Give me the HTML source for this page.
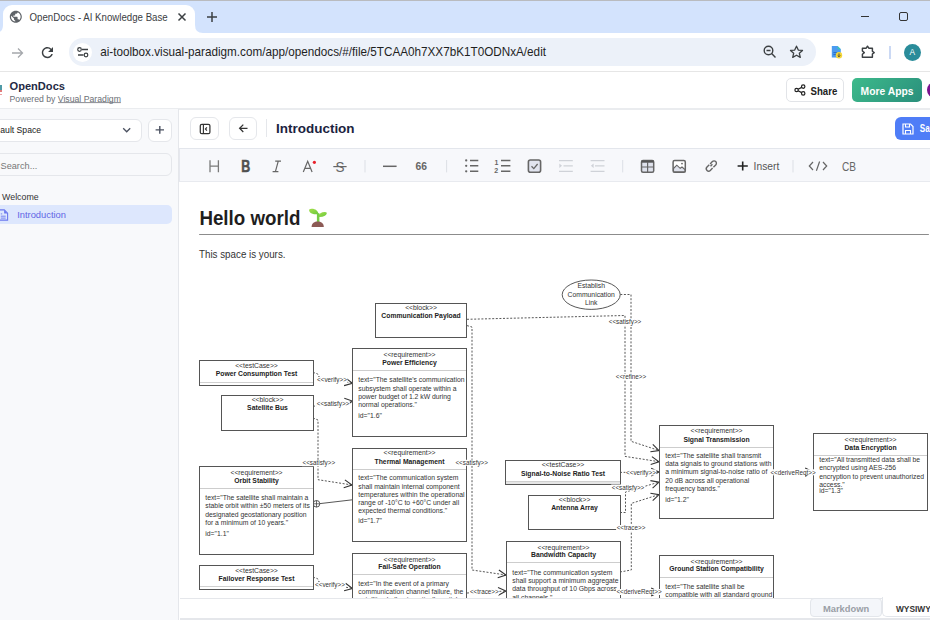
<!DOCTYPE html>
<html><head><meta charset="utf-8">
<style>
*{margin:0;padding:0;box-sizing:border-box}
html,body{width:930px;height:620px;overflow:hidden;background:#fff;font-family:"Liberation Sans",sans-serif;position:relative}
.a{position:absolute}
svg{display:block}
</style></head><body>
<!-- tab strip -->
<div class="a" style="left:0;top:0;width:930px;height:33px;background:#d3e3fd"></div>
<div class="a" style="left:0;top:0;width:930px;height:1px;background:#b9bbbf"></div>
<div class="a" style="left:3px;top:5px;width:192px;height:29px;background:#fff;border-radius:9px 9px 0 0"></div>
<!-- flare corners -->
<svg class="a" style="left:-5px;top:25px" width="8" height="9"><path d="M0 8 Q8 8 8 0 L8 9 L0 9Z" fill="#fff"/></svg>
<svg class="a" style="left:195px;top:25px" width="8" height="9"><path d="M8 8 Q0 8 0 0 L0 9 L8 9Z" fill="#fff"/></svg>
<svg class="a" style="left:0;top:0" width="30" height="30" viewBox="0 0 30 30"><path transform="translate(8.6 9.6) scale(0.6)" fill="#5f6368" d="M12 2C6.48 2 2 6.48 2 12s4.48 10 10 10 10-4.48 10-10S17.52 2 12 2zm-1 17.93c-3.950-.49-7-3.850-7-7.930 0-.62.08-1.210.21-1.790L9 15v1c0 1.100.9 2 2 2v1.930zm6.900-2.540c-.26-.81-1-1.390-1.900-1.390h-1v-3c0-.55-.45-1-1-1H8v-2h2c.55 0 1-.45 1-1V7h2c1.100 0 2-.9 2-2v-.41c2.930 1.190 5 4.060 5 7.410 0 2.080-.8 3.970-2.100 5.390z"/></svg>

<svg class="a" style="left:177px;top:12px" width="10" height="10"><path d="M1.5 1.5L8.5 8.5M8.5 1.5L1.5 8.5" stroke="#3c4043" stroke-width="1.5"/></svg>
<svg class="a" style="left:206px;top:11px" width="12" height="12"><path d="M6 1V11M1 6H11" stroke="#3c4043" stroke-width="1.5"/></svg>
<div class="a" style="left:861px;top:16px;width:8px;height:1.2px;background:#333"></div>
<div class="a" style="left:899px;top:12px;width:9px;height:9px;border:1.2px solid #333;border-radius:2px"></div>

<!-- address row -->
<div class="a" style="left:0;top:71px;width:930px;height:1px;background:#e6e6e6"></div>
<svg class="a" style="left:11px;top:46.5px" width="13" height="12"><path d="M1 6H11.5M7 1.5L11.5 6L7 10.5" stroke="#a5a8ac" stroke-width="1.3" fill="none"/></svg>
<svg class="a" style="left:0;top:0" width="70" height="70" viewBox="0 0 70 70"><path transform="translate(39 44.2) scale(0.7)" fill="#3c4043" d="M17.65 6.35A7.958 7.958 0 0 0 12 4c-4.420 0-7.990 3.580-7.990 8s3.570 8 7.990 8c3.730 0 6.840-2.550 7.730-6h-2.080c-.82 2.330-3.040 4-5.650 4-3.310 0-6-2.690-6-6s2.690-6 6-6c1.660 0 3.140.69 4.220 1.780L13 11h7V4l-2.350 2.350z"/></svg>
<div class="a" style="left:69px;top:38px;width:747px;height:28px;background:#ecf1f9;border-radius:14px"></div>
<div class="a" style="left:73px;top:43px;width:19px;height:19px;background:#fff;border-radius:50%"></div>
<svg class="a" style="left:77px;top:47px" width="12" height="11"><circle cx="2.5" cy="2.5" r="1.8" stroke="#3c4043" stroke-width="1.2" fill="none"/><path d="M5 2.5H11M1 8H6.5" stroke="#3c4043" stroke-width="1.4"/><circle cx="9" cy="8" r="1.8" stroke="#3c4043" stroke-width="1.2" fill="none"/></svg>

<svg class="a" style="left:763px;top:45px" width="14" height="14"><circle cx="5.5" cy="5.5" r="4.3" stroke="#3c4043" stroke-width="1.4" fill="none"/><path d="M3.5 5.5H7.5M8.6 8.6L12.5 12.5" stroke="#3c4043" stroke-width="1.4"/></svg>
<svg class="a" style="left:789px;top:45px" width="15" height="14" viewBox="0 0 15 14"><path d="M7.5 1.2L9.3 5.1L13.5 5.4L10.3 8.2L11.3 12.4L7.5 10.2L3.7 12.4L4.7 8.2L1.5 5.4L5.7 5.1Z" stroke="#3c4043" stroke-width="1.3" fill="none" stroke-linejoin="round"/></svg>
<svg class="a" style="left:830px;top:44px" width="17" height="17"><path d="M1.8 2H7.6L10.8 5.2V13.6H1.8Z" fill="#4b9bf0"/><path d="M7.6 2L10.8 5.2H7.6Z" fill="#3cc7b0"/><rect x="3.4" y="8" width="3.6" height="1.1" fill="#2f6fc8"/><rect x="3.4" y="10" width="3" height="1.1" fill="#2f6fc8"/><circle cx="9" cy="11.3" r="3.2" fill="#f4d63a"/><path d="M9 9.4V12.6M7.7 11.5L9 12.8L10.3 11.5" stroke="#444" stroke-width="0.9" fill="none"/></svg>
<svg class="a" style="left:860px;top:44px" width="17" height="16" viewBox="0 0 17 16"><path d="M2.4 4.2H6.2L7.5 2.2L8.8 4.2H12.4V7.2L14.2 8.6L12.4 10V13.2H2.4V10.2L4.3 8.6L2.4 7Z" stroke="#3c4043" stroke-width="1.45" fill="none" stroke-linejoin="round"/></svg>
<div class="a" style="left:889.3px;top:45.5px;width:1.4px;height:13px;background:#cbd9f4"></div>
<div class="a" style="left:903.7px;top:43.8px;width:17.2px;height:17.2px;background:#2a8c9a;border-radius:50%;color:#fff;font-size:8.4px;text-align:center;line-height:17.6px">A</div>

<!-- app header -->
<div class="a" style="left:0;top:108px;width:930px;height:2px;background:#eaecef"></div>
<div class="a" style="left:0;top:85px;width:1.5px;height:4.5px;background:#4f9aa6"></div><div class="a" style="left:0;top:90.3px;width:1.5px;height:1.5px;background:#e07a7a"></div><div class="a" style="left:0;top:94px;width:1.5px;height:1px;background:#eca0a0"></div>


<div class="a" style="left:786px;top:78px;width:58px;height:24px;border:1px solid #e2e4e8;border-radius:5px;background:#fff"></div>
<svg class="a" style="left:794px;top:84px" width="12" height="12" viewBox="0 0 12 12"><circle cx="9.2" cy="2.6" r="1.7" stroke="#222" stroke-width="1.2" fill="none"/><circle cx="2.6" cy="6" r="1.7" stroke="#222" stroke-width="1.2" fill="none"/><circle cx="9.2" cy="9.4" r="1.7" stroke="#222" stroke-width="1.2" fill="none"/><path d="M4.1 5.2L7.7 3.4M4.1 6.8L7.7 8.6" stroke="#222" stroke-width="1.2"/></svg>

<div class="a" style="left:852px;top:78px;width:70px;height:24px;border-radius:5px;background:linear-gradient(135deg,#3dba8b,#2a8f7c);"></div>
<div class="a" style="left:927px;top:82.4px;width:16px;height:16px;border-radius:50%;background:#7a1390"></div>

<!-- sidebar -->
<div class="a" style="left:0;top:109px;width:179px;height:511px;background:#f8f9fb;border-right:1px solid #e5e7eb"></div>
<div class="a" style="left:-10px;top:119px;width:152px;height:22.5px;background:#fff;border:1px solid #e5e7eb;border-radius:6px"></div>

<svg class="a" style="left:122px;top:127px" width="10" height="7"><path d="M1.2 1.2L4.7 4.8L8.2 1.2" stroke="#4b5160" stroke-width="1.3" fill="none"/></svg>
<div class="a" style="left:148px;top:119px;width:24px;height:23px;background:#fff;border:1px solid #e5e7eb;border-radius:6px"></div>
<svg class="a" style="left:154px;top:124px" width="12" height="12"><path d="M5.8 2V9.8M1.6 5.9H10" stroke="#4b5160" stroke-width="1.4"/></svg>
<div class="a" style="left:-10px;top:153px;width:182px;height:23px;background:#f8f9fb;border:1px solid #e5e7eb;border-radius:6px"></div>


<div class="a" style="left:-10px;top:205px;width:182px;height:19px;background:#dde7fd;border-radius:5px"></div>
<svg class="a" style="left:-2px;top:208.5px" width="11" height="12"><path d="M0.8 0.9H6.3L9.6 4.2V11.1H0.8Z" stroke="#6b78ee" stroke-width="1.1" fill="none"/><path d="M6.1 1V4.4H9.5Z" fill="#6b78ee"/><path d="M2.8 4.9H4.2M2.8 7.2H7.7M2.8 9.1H7.7" stroke="#6b78ee" stroke-width="0.9"/></svg>


<!-- doc header -->
<div class="a" style="left:190px;top:117px;width:29px;height:23px;border:1px solid #e5e7eb;border-radius:6px;background:#fff"></div>
<svg class="a" style="left:199px;top:122.5px" width="12" height="12"><rect x="1.3" y="1.3" width="9.6" height="9.4" rx="1.5" stroke="#333" stroke-width="1.25" fill="none"/><path d="M4.4 1.5V10.5M7.9 4.3L6.4 6L7.9 7.7" stroke="#333" stroke-width="1.15" fill="none"/></svg>
<div class="a" style="left:229px;top:117px;width:28px;height:23px;border:1px solid #e5e7eb;border-radius:6px;background:#fff"></div>
<svg class="a" style="left:238px;top:123px" width="12" height="11"><path d="M9.5 5.3H1.8M5.3 1.6L1.6 5.3L5.3 9" stroke="#333" stroke-width="1.25" fill="none"/></svg>
<div class="a" style="left:266px;top:119px;width:1px;height:18px;background:#e5e7eb"></div>

<div class="a" style="left:895px;top:117px;width:50px;height:23px;border-radius:6px;background:#4f7df7"></div>
<svg class="a" style="left:902px;top:123px" width="12" height="12"><path d="M1 1H8.5L11 3.5V11H1Z" stroke="#fff" stroke-width="1.2" fill="none"/><path d="M3.5 1V4H7.5V1M3.5 11V7.5H8.5V11" stroke="#fff" stroke-width="1.1" fill="none"/></svg>


<!-- toolbar -->
<div class="a" id="tb" style="left:179px;top:147.5px;width:751px;height:34.5px;background:#f7f8fb;border-top:1.5px solid #e3e6ec;border-bottom:1px solid #e8eaef;border-left:1px solid #e6e8ee"></div>
<!-- TOOLBAR_ICONS -->
<svg class="a" style="left:0;top:0" width="930" height="620" viewBox="0 0 930 620">
<g fill="none" stroke-linecap="butt">
<!-- H -->
<path d="M210 160.3V172.2M218.4 160.3V172.2M210 166.1H218.4" stroke="#7a7a7a" stroke-width="1.3"/>
<!-- B -->
<text x="241.2" y="172.1" font-family="Liberation Sans" font-weight="bold" font-size="15.6" fill="#505050" stroke="#505050" stroke-width="0.5" textLength="9" lengthAdjust="spacingAndGlyphs">B</text>
<!-- I -->
<path d="M275.2 161.2H281M272.6 171.7H278.4M278.2 161.3L275.4 171.6" stroke="#666" stroke-width="1.2"/>
<!-- A -->
<path d="M303.3 172.1L307.7 161.3L312.1 172.1M304.8 168.4H310.6" stroke="#666" stroke-width="1.2"/>
<circle cx="314.4" cy="162.3" r="1.6" fill="#e8202a" stroke="none"/>
<!-- S -->
<text x="335.4" y="172.1" font-family="Liberation Sans" font-size="15" fill="#666" stroke="none" textLength="9" lengthAdjust="spacingAndGlyphs">S</text>
<path d="M333.3 166.6H346.6" stroke="#666" stroke-width="1.2"/>
<!-- dividers -->
<path d="M365 160V172.4M446.6 160V172.4M622.7 160V172.4M793 160V172.4" stroke="#dcdfe5" stroke-width="1"/>
<!-- dash -->
<path d="M383 166.3H396.6" stroke="#666" stroke-width="1.5"/>
<!-- 66 -->
<text x="415.6" y="170.1" font-family="Liberation Sans" font-weight="bold" font-size="10" fill="#666" stroke="none" textLength="11.5" lengthAdjust="spacingAndGlyphs">66</text>
<!-- bullets -->
<circle cx="466.2" cy="160.4" r="1.15" fill="#666" stroke="none"/><circle cx="466.2" cy="165.8" r="1.15" fill="#666" stroke="none"/><circle cx="466.2" cy="171.3" r="1.15" fill="#666" stroke="none"/>
<path d="M470 160.4H478.3M470 165.8H478.3M470 171.3H478.3" stroke="#666" stroke-width="1.45"/>
<!-- ordered -->
<text x="494.6" y="165.3" font-family="Liberation Sans" font-weight="bold" font-size="7" fill="#666" stroke="none">1</text>
<text x="494.3" y="172.6" font-family="Liberation Sans" font-weight="bold" font-size="7" fill="#666" stroke="none">2</text>
<path d="M501 160.4H510.4M501 165.8H510.4M501 171.3H510.4" stroke="#666" stroke-width="1.45"/>
<!-- checkbox -->
<rect x="528.4" y="160" width="12.2" height="12.2" rx="2" fill="#e1e4ef" stroke="#666" stroke-width="1.6"/>
<path d="M531.5 166.3L533.8 168.6L537.6 164" stroke="#666" stroke-width="1.3"/>
<!-- indent -->
<path d="M559 160.6H572.8M563.5 165.8H572.8M559 171.3H572.8" stroke="#cfd2d8" stroke-width="1.2"/>
<path d="M559.3 163.6L562 165.8L559.3 168Z" fill="#cfd2d8" stroke="none"/>
<path d="M590.6 160.6H604.5M595 165.8H604.5M590.6 171.3H604.5" stroke="#cfd2d8" stroke-width="1.2"/>
<path d="M593.6 163.6L590.9 165.8L593.6 168Z" fill="#cfd2d8" stroke="none"/>
<!-- table -->
<rect x="641.5" y="160.4" width="12.2" height="11.8" rx="1.5" fill="#dfe2ec" stroke="#666" stroke-width="1.5"/>
<path d="M641.5 161.6H653.7" stroke="#555" stroke-width="2.2"/>
<path d="M647.6 162V172.2M641.5 167H653.7" stroke="#666" stroke-width="1.2"/>
<!-- image -->
<rect x="673.1" y="160.4" width="12.2" height="11.8" rx="1.5" fill="#fff" stroke="#666" stroke-width="1.5"/>
<path d="M673.5 168.5L676.8 165.2L680.2 168.3L682 167L684.9 169.5V171.8H673.5Z" fill="#dfe2ec" stroke="#666" stroke-width="1.1"/>
<circle cx="682" cy="163.6" r="0.9" fill="#666" stroke="none"/>
<!-- link -->
<path d="M709.3 164.8L707 167.1A2.3 2.3 0 0 0 710.3 170.4L712.6 168.1M710.5 166.2L712.4 164.3M713.4 167.2L715.7 164.9A2.3 2.3 0 0 0 712.4 161.6L710.1 163.9" stroke="#666" stroke-width="1.4"/>
<!-- plus -->
<path d="M742.7 161.4V170.5M737.6 166H747.8" stroke="#222" stroke-width="1.6"/>

<!-- code -->
<path d="M813 162L809.3 166L813 170M823 162L826.7 166L823 170M819.6 161.5L816.4 170.7" stroke="#666" stroke-width="1.2"/>

</g></svg>

<!-- content -->

<!-- SPROUT -->
<svg class="a" style="left:300px;top:200px" width="40" height="32" viewBox="0 0 40 32">
<defs><linearGradient id="lf" x1="0" y1="0" x2="1" y2="1"><stop offset="0" stop-color="#a4e04c"/><stop offset="1" stop-color="#6cc83e"/></linearGradient></defs>
<path d="M18.6 14.2C18.2 10.8 15 8.6 11.5 8.8C9.6 8.9 8.8 9.6 9.2 10.9C10 13.2 13.5 14.6 18.6 14.2Z" fill="url(#lf)"/>
<path d="M17.6 16.8C19 13.4 22 11.9 25 12.1C26.5 12.2 27 12.7 26.7 13.7C26 16 22.5 17.4 17.6 16.8Z" fill="url(#lf)"/>
<path d="M16.9 13.2H19.4V22.4H16.9Z" fill="#74cc44"/>
<path d="M11.6 26.9C11.8 23.1 14.5 21.6 17.7 21.6C21 21.6 23.6 23.1 23.8 26.9Z" fill="#8c5a55"/>
</svg>
<div class="a" style="left:199px;top:233.7px;width:729.7px;height:1.8px;background:#8c8c8c;border-radius:1px"></div>


<!-- DIAGRAM -->
<svg class="a" style="left:0;top:0" width="930" height="620" viewBox="0 0 930 620" font-family="Liberation Sans">
<path d="M467.0 319.3 L625.0 315.5 L625.0 456.4 L659.0 461.7" fill="none" stroke="#444" stroke-width="0.9" stroke-dasharray="2 1.6"/>
<path d="M651.9 456.6L659.0 461.7L650.7 464.4" fill="none" stroke="#333" stroke-width="1.1"/>
<path d="M620.3 294.5 L631.0 294.5 L631.0 441.3 L659.0 450.5" fill="none" stroke="#444" stroke-width="0.9" stroke-dasharray="2 1.6"/>
<path d="M652.8 444.4L659.0 450.5L650.4 451.8" fill="none" stroke="#333" stroke-width="1.1"/>
<path d="M467.0 325.6 L472.0 327.0 L472.0 570.0 L506.0 575.0" fill="none" stroke="#444" stroke-width="0.9" stroke-dasharray="2 1.6"/>
<path d="M498.9 570.0L506.0 575.0L497.7 577.7" fill="none" stroke="#333" stroke-width="1.1"/>
<path d="M313.0 372.4 L317.5 373.8 L319.0 377.0 L352.5 383.2" fill="none" stroke="#444" stroke-width="0.9" stroke-dasharray="2 1.6"/>
<path d="M345.5 377.9L352.5 383.2L344.1 385.6" fill="none" stroke="#333" stroke-width="1.1"/>
<path d="M313.0 406.3 L352.5 401.1" fill="none" stroke="#444" stroke-width="0.9" stroke-dasharray="2 1.6"/>
<path d="M344.3 398.2L352.5 401.1L345.3 406.0" fill="none" stroke="#333" stroke-width="1.1"/>
<path d="M313.0 418.0 L318.0 420.0 L318.0 479.7 L352.0 485.0" fill="none" stroke="#444" stroke-width="0.9" stroke-dasharray="2 1.6"/>
<path d="M344.9 479.9L352.0 485.0L343.7 487.7" fill="none" stroke="#333" stroke-width="1.1"/>
<path d="M320 503.6L352.4 499.8" stroke="#444" stroke-width="0.9" fill="none"/>
<circle cx="316.5" cy="503.8" r="3.3" fill="#fff" stroke="#444" stroke-width="0.9"/><path d="M313.2 503.8H319.8M316.5 500.5V507.1" stroke="#444" stroke-width="0.8"/>
<path d="M313.0 577.2 L317.5 578.6 L319.0 582.0 L352.5 588.5" fill="none" stroke="#444" stroke-width="0.9" stroke-dasharray="2 1.6"/>
<path d="M345.6 583.2L352.5 588.5L344.1 590.8" fill="none" stroke="#333" stroke-width="1.1"/>
<path d="M467.0 593.0 L506.0 591.0" fill="none" stroke="#444" stroke-width="0.9" stroke-dasharray="2 1.6"/>
<path d="M498.0 587.5L506.0 591.0L498.4 595.3" fill="none" stroke="#333" stroke-width="1.1"/>
<path d="M620.0 472.4 L659.0 472.0" fill="none" stroke="#444" stroke-width="0.9" stroke-dasharray="2 1.6"/>
<path d="M651.2 468.2L659.0 472.0L651.2 476.0" fill="none" stroke="#333" stroke-width="1.1"/>
<path d="M620.0 512.5 L625.5 512.5 L625.5 492.0 L659.0 482.1" fill="none" stroke="#444" stroke-width="0.9" stroke-dasharray="2 1.6"/>
<path d="M650.4 480.6L659.0 482.1L652.6 488.1" fill="none" stroke="#333" stroke-width="1.1"/>
<path d="M620.0 572.0 L631.3 570.0 L631.3 503.4 L659.0 494.6" fill="none" stroke="#444" stroke-width="0.9" stroke-dasharray="2 1.6"/>
<path d="M650.4 493.2L659.0 494.6L652.7 500.7" fill="none" stroke="#333" stroke-width="1.1"/>
<path d="M620.0 592.0 L659.0 592.0" fill="none" stroke="#444" stroke-width="0.9" stroke-dasharray="2 1.6"/>
<path d="M651.2 588.1L659.0 592.0L651.2 595.9" fill="none" stroke="#333" stroke-width="1.1"/>
<path d="M773.7 472.0 L813.0 472.0" fill="none" stroke="#444" stroke-width="0.9" stroke-dasharray="2 1.6"/>
<path d="M805.2 468.1L813.0 472.0L805.2 475.9" fill="none" stroke="#333" stroke-width="1.1"/>
<rect x="375.5" y="303.5" width="91.0" height="34.0" fill="#fff" stroke="#555" stroke-width="1"/>
<text x="421.0" y="309.5" font-size="6.8" text-anchor="middle" fill="#333">&lt;&lt;block&gt;&gt;</text>
<text x="421.0" y="317.5" font-size="6.8" font-weight="bold" text-anchor="middle" fill="#222">Communication Payload</text>
<ellipse cx="591.2" cy="294.7" rx="29" ry="14.7" fill="#fff" stroke="#444" stroke-width="0.9"/>
<text x="591.2" y="288.4" font-size="6.8" text-anchor="middle" fill="#333">Establish</text>
<text x="591.2" y="296.8" font-size="6.8" text-anchor="middle" fill="#333">Communication</text>
<text x="591.2" y="305.2" font-size="6.8" text-anchor="middle" fill="#333">Link</text>
<rect x="199.5" y="360.5" width="114.0" height="25.0" fill="#fff" stroke="#555" stroke-width="1"/>
<path d="M200.0 382.5H313.0" stroke="#d0d0d0" stroke-width="1"/>
<text x="256.5" y="367.5" font-size="6.8" text-anchor="middle" fill="#333">&lt;&lt;testCase&gt;&gt;</text>
<text x="256.5" y="376.0" font-size="6.8" font-weight="bold" text-anchor="middle" fill="#222">Power Consumption Test</text>
<rect x="352.5" y="348.5" width="114.0" height="88.0" fill="#fff" stroke="#555" stroke-width="1"/>
<path d="M353.0 370.5H466.0" stroke="#cdcdcd" stroke-width="1"/>
<text x="409.5" y="357.3" font-size="6.8" text-anchor="middle" fill="#333">&lt;&lt;requirement&gt;&gt;</text>
<text x="409.5" y="364.8" font-size="6.8" font-weight="bold" text-anchor="middle" fill="#222">Power Efficiency</text>
<text x="358.3" y="382.3" font-size="6.8" text-anchor="start" fill="#333">text="The satellite's communication</text>
<text x="358.3" y="390.6" font-size="6.8" text-anchor="start" fill="#333">subsystem shall operate within a</text>
<text x="358.3" y="398.9" font-size="6.8" text-anchor="start" fill="#333">power budget of 1.2 kW during</text>
<text x="358.3" y="407.2" font-size="6.8" text-anchor="start" fill="#333">normal operations."</text>
<text x="358.3" y="418.4" font-size="6.8" text-anchor="start" fill="#333">id="1.6"</text>
<rect x="221.5" y="395.5" width="92.0" height="35.0" fill="#fff" stroke="#555" stroke-width="1"/>
<text x="267.5" y="402.1" font-size="6.8" text-anchor="middle" fill="#333">&lt;&lt;block&gt;&gt;</text>
<text x="267.5" y="410.1" font-size="6.8" font-weight="bold" text-anchor="middle" fill="#222">Satellite Bus</text>
<rect x="352.5" y="448.5" width="114.0" height="93.0" fill="#fff" stroke="#555" stroke-width="1"/>
<path d="M353.0 469.5H466.0" stroke="#cdcdcd" stroke-width="1"/>
<text x="409.5" y="455.3" font-size="6.8" text-anchor="middle" fill="#333">&lt;&lt;requirement&gt;&gt;</text>
<text x="409.5" y="464.0" font-size="6.8" font-weight="bold" text-anchor="middle" fill="#222">Thermal Management</text>
<text x="358.3" y="480.2" font-size="6.8" text-anchor="start" fill="#333">text="The communication system</text>
<text x="358.3" y="488.5" font-size="6.8" text-anchor="start" fill="#333">shall maintain internal component</text>
<text x="358.3" y="496.8" font-size="6.8" text-anchor="start" fill="#333">temperatures within the operational</text>
<text x="358.3" y="505.1" font-size="6.8" text-anchor="start" fill="#333">range of -10°C to +60°C under all</text>
<text x="358.3" y="513.4" font-size="6.8" text-anchor="start" fill="#333">expected thermal conditions."</text>
<text x="358.3" y="523.4" font-size="6.8" text-anchor="start" fill="#333">id="1.7"</text>
<rect x="199.5" y="466.5" width="114.0" height="88.0" fill="#fff" stroke="#555" stroke-width="1"/>
<path d="M200.0 488.5H313.0" stroke="#cdcdcd" stroke-width="1"/>
<text x="256.5" y="474.9" font-size="6.8" text-anchor="middle" fill="#333">&lt;&lt;requirement&gt;&gt;</text>
<text x="256.5" y="482.9" font-size="6.8" font-weight="bold" text-anchor="middle" fill="#222">Orbit Stability</text>
<text x="205.3" y="499.9" font-size="6.8" text-anchor="start" fill="#333">text="The satellite shall maintain a</text>
<text x="205.3" y="508.2" font-size="6.8" text-anchor="start" fill="#333">stable orbit within ±50 meters of its</text>
<text x="205.3" y="516.5" font-size="6.8" text-anchor="start" fill="#333">designated geostationary position</text>
<text x="205.3" y="524.8" font-size="6.8" text-anchor="start" fill="#333">for a minimum of 10 years."</text>
<text x="205.3" y="536.0" font-size="6.8" text-anchor="start" fill="#333">id="1.1"</text>
<rect x="199.5" y="565.5" width="114.0" height="24.0" fill="#fff" stroke="#555" stroke-width="1"/>
<path d="M200.0 586.5H313.0" stroke="#d0d0d0" stroke-width="1"/>
<text x="256.5" y="572.7" font-size="6.8" text-anchor="middle" fill="#333">&lt;&lt;testCase&gt;&gt;</text>
<text x="256.5" y="581.2" font-size="6.8" font-weight="bold" text-anchor="middle" fill="#222">Failover Response Test</text>
<rect x="352.5" y="553.5" width="114.0" height="87.0" fill="#fff" stroke="#555" stroke-width="1"/>
<path d="M353.0 574.5H466.0" stroke="#cdcdcd" stroke-width="1"/>
<text x="409.5" y="561.6" font-size="6.8" text-anchor="middle" fill="#333">&lt;&lt;requirement&gt;&gt;</text>
<text x="409.5" y="569.1" font-size="6.8" font-weight="bold" text-anchor="middle" fill="#222">Fail-Safe Operation</text>
<text x="358.3" y="585.8" font-size="6.8" text-anchor="start" fill="#333">text="In the event of a primary</text>
<text x="358.3" y="594.1" font-size="6.8" text-anchor="start" fill="#333">communication channel failure, the</text>
<text x="358.3" y="602.4" font-size="6.8" text-anchor="start" fill="#333">satellite shall automatically switch</text>
<rect x="505.5" y="460.5" width="115.0" height="24.0" fill="#fff" stroke="#555" stroke-width="1"/>
<rect x="506.0" y="481.3" width="114.0" height="2.7" fill="#e6e6e6"/>
<path d="M506.0 481.5H620.0" stroke="#d0d0d0" stroke-width="1"/>
<text x="563.0" y="467.4" font-size="6.8" text-anchor="middle" fill="#333">&lt;&lt;testCase&gt;&gt;</text>
<text x="563.0" y="475.9" font-size="6.8" font-weight="bold" text-anchor="middle" fill="#222">Signal-to-Noise Ratio Test</text>
<rect x="528.5" y="495.5" width="92.0" height="34.0" fill="#fff" stroke="#555" stroke-width="1"/>
<text x="574.5" y="501.7" font-size="6.8" text-anchor="middle" fill="#333">&lt;&lt;block&gt;&gt;</text>
<text x="574.5" y="509.7" font-size="6.8" font-weight="bold" text-anchor="middle" fill="#222">Antenna Array</text>
<rect x="506.5" y="541.5" width="114.0" height="99.0" fill="#fff" stroke="#555" stroke-width="1"/>
<path d="M507.0 562.5H620.0" stroke="#cdcdcd" stroke-width="1"/>
<text x="563.5" y="549.6" font-size="6.8" text-anchor="middle" fill="#333">&lt;&lt;requirement&gt;&gt;</text>
<text x="563.5" y="557.1" font-size="6.8" font-weight="bold" text-anchor="middle" fill="#222">Bandwidth Capacity</text>
<text x="512.3" y="574.6" font-size="6.8" text-anchor="start" fill="#333">text="The communication system</text>
<text x="512.3" y="582.9" font-size="6.8" text-anchor="start" fill="#333">shall support a minimum aggregate</text>
<text x="512.3" y="591.2" font-size="6.8" text-anchor="start" fill="#333">data throughput of 10 Gbps across</text>
<text x="512.3" y="599.5" font-size="6.8" text-anchor="start" fill="#333">all channels."</text>
<rect x="659.5" y="425.5" width="114.0" height="93.0" fill="#fff" stroke="#555" stroke-width="1"/>
<path d="M660.0 447.5H773.0" stroke="#cdcdcd" stroke-width="1"/>
<text x="716.5" y="432.9" font-size="6.8" text-anchor="middle" fill="#333">&lt;&lt;requirement&gt;&gt;</text>
<text x="716.5" y="442.0" font-size="6.8" font-weight="bold" text-anchor="middle" fill="#222">Signal Transmission</text>
<text x="665.3" y="457.7" font-size="6.8" text-anchor="start" fill="#333">text="The satellite shall transmit</text>
<text x="665.3" y="466.0" font-size="6.8" text-anchor="start" fill="#333">data signals to ground stations with</text>
<text x="665.3" y="474.3" font-size="6.8" text-anchor="start" fill="#333">a minimum signal-to-noise ratio of</text>
<text x="665.3" y="482.6" font-size="6.8" text-anchor="start" fill="#333">20 dB across all operational</text>
<text x="665.3" y="490.9" font-size="6.8" text-anchor="start" fill="#333">frequency bands."</text>
<text x="665.3" y="502.1" font-size="6.8" text-anchor="start" fill="#333">id="1.2"</text>
<rect x="813.5" y="433.5" width="114.0" height="77.0" fill="#fff" stroke="#555" stroke-width="1"/>
<path d="M814.0 455.5H927.0" stroke="#cdcdcd" stroke-width="1"/>
<text x="870.5" y="442.2" font-size="6.8" text-anchor="middle" fill="#333">&lt;&lt;requirement&gt;&gt;</text>
<text x="870.5" y="449.7" font-size="6.8" font-weight="bold" text-anchor="middle" fill="#222">Data Encryption</text>
<text x="819.3" y="462.0" font-size="6.8" text-anchor="start" fill="#333">text="All transmitted data shall be</text>
<text x="819.3" y="470.3" font-size="6.8" text-anchor="start" fill="#333">encrypted using AES-256</text>
<text x="819.3" y="478.6" font-size="6.8" text-anchor="start" fill="#333">encryption to prevent unauthorized</text>
<text x="819.3" y="486.9" font-size="6.8" text-anchor="start" fill="#333">access."</text>
<text x="819.3" y="493.2" font-size="6.8" text-anchor="start" fill="#333">id="1.3"</text>
<rect x="659.5" y="555.5" width="114.0" height="85.0" fill="#fff" stroke="#555" stroke-width="1"/>
<path d="M660.0 577.5H773.0" stroke="#cdcdcd" stroke-width="1"/>
<text x="716.5" y="563.9" font-size="6.8" text-anchor="middle" fill="#333">&lt;&lt;requirement&gt;&gt;</text>
<text x="716.5" y="571.4" font-size="6.8" font-weight="bold" text-anchor="middle" fill="#222">Ground Station Compatibility</text>
<text x="665.3" y="588.9" font-size="6.8" text-anchor="start" fill="#333">text="The satellite shall be</text>
<text x="665.3" y="597.2" font-size="6.8" text-anchor="start" fill="#333">compatible with all standard ground</text>
<text x="665.3" y="605.5" font-size="6.8" text-anchor="start" fill="#333">stations</text>
<rect x="608.2" y="319.0" width="33.6" height="6" fill="#fff"/>
<text x="625.0" y="324.2" font-size="6.3" text-anchor="middle" fill="#333">&lt;&lt;satisfy&gt;&gt;</text>
<rect x="615.3" y="374.0" width="31.5" height="6" fill="#fff"/>
<text x="631.0" y="379.2" font-size="6.3" text-anchor="middle" fill="#333">&lt;&lt;refine&gt;&gt;</text>
<rect x="454.9" y="459.8" width="33.6" height="6" fill="#fff"/>
<text x="471.7" y="465.0" font-size="6.3" text-anchor="middle" fill="#333">&lt;&lt;satisfy&gt;&gt;</text>
<rect x="316.6" y="377.0" width="30.8" height="6" fill="#fff"/>
<text x="332.0" y="382.2" font-size="6.3" text-anchor="middle" fill="#333">&lt;&lt;verify&gt;&gt;</text>
<rect x="316.2" y="401.0" width="33.6" height="6" fill="#fff"/>
<text x="333.0" y="406.2" font-size="6.3" text-anchor="middle" fill="#333">&lt;&lt;satisfy&gt;&gt;</text>
<rect x="302.0" y="460.2" width="33.6" height="6" fill="#fff"/>
<text x="318.8" y="465.4" font-size="6.3" text-anchor="middle" fill="#333">&lt;&lt;satisfy&gt;&gt;</text>
<rect x="314.6" y="582.0" width="30.8" height="6" fill="#fff"/>
<text x="330.0" y="587.2" font-size="6.3" text-anchor="middle" fill="#333">&lt;&lt;verify&gt;&gt;</text>
<rect x="469.4" y="588.9" width="29.7" height="6" fill="#fff"/>
<text x="484.3" y="594.1" font-size="6.3" text-anchor="middle" fill="#333">&lt;&lt;trace&gt;&gt;</text>
<rect x="625.6" y="469.4" width="30.8" height="6" fill="#fff"/>
<text x="641.0" y="474.6" font-size="6.3" text-anchor="middle" fill="#333">&lt;&lt;verify&gt;&gt;</text>
<rect x="611.2" y="484.5" width="33.6" height="6" fill="#fff"/>
<text x="628.0" y="489.7" font-size="6.3" text-anchor="middle" fill="#333">&lt;&lt;satisfy&gt;&gt;</text>
<rect x="616.1" y="525.0" width="29.7" height="6" fill="#fff"/>
<text x="631.0" y="530.2" font-size="6.3" text-anchor="middle" fill="#333">&lt;&lt;trace&gt;&gt;</text>
<rect x="615.9" y="589.0" width="46.2" height="6" fill="#fff"/>
<text x="639.0" y="594.2" font-size="6.3" text-anchor="middle" fill="#333">&lt;&lt;deriveReqt&gt;&gt;</text>
<rect x="769.9" y="469.3" width="46.2" height="6" fill="#fff"/>
<text x="793.0" y="474.5" font-size="6.3" text-anchor="middle" fill="#333">&lt;&lt;deriveReqt&gt;&gt;</text>
</svg>
<!-- /DIAGRAM -->

<!-- bottom bar -->
<div class="a" style="left:180px;top:598px;width:750px;height:22px;background:#fff;border-top:1px solid #e5e7eb"></div>
<div class="a" style="left:180px;top:618px;width:750px;height:2px;background:#e5e7eb"></div>
<div class="a" style="left:810px;top:598px;width:72px;height:19px;background:#f4f6fa;border:1px solid #e3e6eb;border-radius:4px"></div><div class="a" style="left:882px;top:597px;width:60px;height:20px;background:#fff;border-left:1px solid #e3e6eb;border-bottom:1px solid #e3e6eb;border-radius:0 0 0 5px"></div>

<!-- UITEXT -->
<svg class="a" style="left:0;top:0" width="930" height="620" viewBox="0 0 930 620" font-family="Liberation Sans">
<text x="29.50" y="21.10" font-size="10.56" fill="#3c4043" textLength="138.20" lengthAdjust="spacingAndGlyphs">OpenDocs - AI Knowledge Base</text>
<text x="100.20" y="56.30" font-size="12.35" fill="#1f1f1f" textLength="445.80" lengthAdjust="spacingAndGlyphs">ai-toolbox.visual-paradigm.com/app/opendocs/#/file/5TCAA0h7XX7bK1T0ODNxA/edit</text>
<text x="9.50" y="89.70" font-size="10.56" font-weight="bold" fill="#1f2a44" textLength="55.50" lengthAdjust="spacingAndGlyphs">OpenDocs</text>
<text x="9.50" y="101.60" font-size="9.05" fill="#6b6f76" textLength="111.40" lengthAdjust="spacingAndGlyphs">Powered by Visual Paradigm</text>
<path d="M58 102.6H120.9" stroke="#6b6f76" stroke-width="0.8"/>
<text x="810.60" y="95.40" font-size="11.80" font-weight="bold" fill="#222" textLength="26.70" lengthAdjust="spacingAndGlyphs">Share</text>
<text x="860.60" y="95.40" font-size="11.80" font-weight="bold" fill="#fff" textLength="52.90" lengthAdjust="spacingAndGlyphs">More Apps</text>
<text x="0.30" y="133.20" font-size="9.33" fill="#222" textLength="40.80" lengthAdjust="spacingAndGlyphs">ault Space</text>
<text x="0.50" y="168.70" font-size="9.88" fill="#777" textLength="36.80" lengthAdjust="spacingAndGlyphs">Search...</text>
<text x="2.10" y="200.00" font-size="9.33" fill="#333" textLength="36.60" lengthAdjust="spacingAndGlyphs">Welcome</text>
<text x="17.20" y="217.90" font-size="9.33" fill="#6166e6" textLength="48.80" lengthAdjust="spacingAndGlyphs">Introduction</text>
<text x="276.00" y="133.00" font-size="13.31" font-weight="bold" fill="#1b2340" textLength="78.60" lengthAdjust="spacingAndGlyphs">Introduction</text>
<text x="919.80" y="132.30" font-size="10.01" font-weight="bold" fill="#fff" textLength="9.94" lengthAdjust="spacingAndGlyphs">Sa</text>
<text x="199.40" y="224.80" font-size="19.89" font-weight="bold" fill="#1e1e1e" textLength="101.10" lengthAdjust="spacingAndGlyphs">Hello world</text>
<text x="199.00" y="257.90" font-size="11.11" fill="#333" textLength="86.50" lengthAdjust="spacingAndGlyphs">This space is yours.</text>
<text x="753.60" y="170.30" font-size="10.97" fill="#555" textLength="25.70" lengthAdjust="spacingAndGlyphs">Insert</text>
<text x="842.00" y="170.50" font-size="12.21" fill="#666" textLength="14.00" lengthAdjust="spacingAndGlyphs">CB</text>
<text x="823.00" y="611.70" font-size="9.60" font-weight="bold" fill="#9a9ea6" textLength="46.20" lengthAdjust="spacingAndGlyphs">Markdown</text>
<text x="895.90" y="611.70" font-size="9.33" font-weight="bold" fill="#333" textLength="41.40" lengthAdjust="spacingAndGlyphs">WYSIWYG</text>
</svg>
<!-- /UITEXT -->
</body></html>
